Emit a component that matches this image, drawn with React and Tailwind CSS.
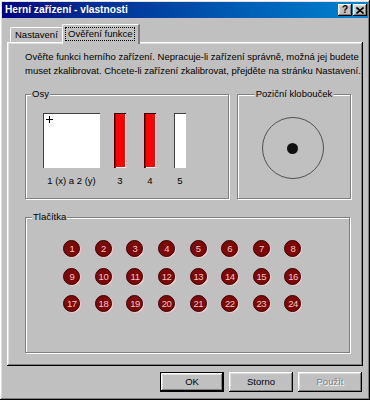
import React from "react";

const raised =
  "shadow-[inset_-1px_-1px_#000,inset_1px_1px_#fff,inset_-2px_-2px_#808080,inset_2px_2px_#dfdfdf]";
const etched = "border border-[#808080] shadow-[inset_1px_1px_#fff,1px_1px_#fff]";
const sunken = "shadow-[inset_1px_1px_#404040,inset_-1px_-1px_#fff]";

function Group({ label, center, labelLeft = "left-[4px]", className, children }) {
  return (
    <div className={`relative ${etched} ${className}`}>
      <span
        className={`absolute -top-[8px] px-[1px] bg-[#c0c0c0] leading-[14px] whitespace-nowrap ${
          center ? "left-1/2 -translate-x-1/2" : labelLeft
        }`}
      >
        {label}
      </span>
      {children}
    </div>
  );
}

function DialogButton({ children, primary, disabled }) {
  return (
    <div
      className={`w-[64px] h-[20px] flex items-center justify-center ${
        primary ? "border border-black" : ""
      } ${raised} ${disabled ? "text-[#808080] [text-shadow:1px_1px_#fff]" : "text-black"}`}
    >
      {children}
    </div>
  );
}

export default function App() {
  const buttons = Array.from({ length: 24 }, (_, i) => i + 1);

  return (
    <div
      className={`w-[370px] h-[400px] bg-[#c0c0c0] px-[2px] pt-[2px] flex flex-col text-[9.5px] text-black ${raised}`}
      style={{ fontFamily: '"Liberation Sans", Arial, sans-serif' }}
    >
      {/* Title bar */}
      <div className="h-[16px] flex items-center justify-between pl-[3px] pr-[1px] bg-gradient-to-r from-[#000080] to-[#1084d0]">
        <span className="text-white font-bold text-[10.2px] leading-none">Herní zařízení - vlastnosti</span>
        <div className="flex gap-[1px]">
          <div className={`w-[14px] h-[12px] bg-[#c0c0c0] ${raised} flex items-center justify-center font-bold text-[10px] leading-none`}>
            ?
          </div>
          <div className={`w-[14px] h-[12px] bg-[#c0c0c0] ${raised} flex items-center justify-center`}>
            <svg width="8" height="7" viewBox="0 0 8 7">
              <path d="M0.5 0.5 L7.5 6.5 M7.5 0.5 L0.5 6.5" stroke="#000" strokeWidth="1.6" />
            </svg>
          </div>
        </div>
      </div>

      {/* Tabs */}
      <div className="mt-[6px] h-[18px] flex items-end pl-[8px]">
        <div className="h-[15px] px-[4px] flex items-center border-t border-l border-white border-r-2 border-r-[#808080] rounded-tl-[2px]">
          Nastavení
        </div>
        <div className="relative z-10 -ml-[2px] -mb-[2px] h-[20px] w-[78px] bg-[#c0c0c0] border-t border-l border-white border-r-2 border-r-[#808080] rounded-tl-[2px] flex items-start justify-center pt-[2px]">
          <span className="px-[2px] leading-[12px] border border-dotted border-black whitespace-nowrap">Ověření funkce</span>
        </div>
      </div>

      {/* Tab page */}
      <div className={`ml-[5px] w-[356px] h-[324px] ${raised} pt-[8px] pl-[18px]`}>
        <p className="leading-[14px] whitespace-nowrap">
          Ověřte funkci herního zařízení. Nepracuje-li zařízení správně, možná jej budete
          <br />
          muset zkalibrovat. Chcete-li zařízení zkalibrovat, přejděte na stránku Nastavení.
        </p>

        <div className="mt-[16px] flex gap-[8px]">
          <Group label="Osy" labelLeft="left-[5px]" className="w-[204px] h-[105px]">
            <div className="flex items-start pl-[17px] pt-[18px]">
              <div className="flex flex-col items-center">
                <div className={`relative w-[57px] h-[55px] bg-white ${sunken}`}>
                  <svg className="absolute left-[3px] top-[3px]" width="7" height="7" viewBox="0 0 7 7">
                    <path d="M3.5 0 V7 M0 3.5 H7" stroke="#000" strokeWidth="1" />
                  </svg>
                </div>
                <span className="mt-[6px] leading-[14px] whitespace-nowrap">1 (x) a 2 (y)</span>
              </div>
              {["3", "4"].map((n, i) => (
                <div key={n} className={`flex flex-col items-center ${i === 0 ? "ml-[14px]" : "ml-[18px]"}`}>
                  <div className="w-[12px] h-[55px] bg-[#ff0000] shadow-[inset_1px_1px_#400000,inset_2px_0_#a00000,inset_-1px_-1px_#fff]" />
                  <span className="mt-[6px] leading-[14px]">{n}</span>
                </div>
              ))}
              <div className="flex flex-col items-center ml-[18px]">
                <div className={`w-[12px] h-[55px] bg-white ${sunken}`} />
                <span className="mt-[6px] leading-[14px]">5</span>
              </div>
            </div>
          </Group>

          <Group label="Poziční klobouček" center className="w-[114px] h-[105px]">
            <div className="h-full flex items-center justify-center pr-[3px] pt-[3px]">
              <div className="w-[62px] h-[62px] rounded-full border border-[#505050] flex items-center justify-center">
                <div className="w-[11px] h-[11px] rounded-full bg-[#111]" />
              </div>
            </div>
          </Group>
        </div>

        <Group label="Tlačítka" labelLeft="left-[6px]" className="mt-[18px] w-[325px] h-[136px]">
          <div className="grid grid-cols-[repeat(8,31.6px)] auto-rows-[27.5px] pl-[30px] pt-[17px]">
            {buttons.map((n) => (
              <div key={n} className="flex items-center justify-center">
                <div className="w-[17px] h-[17px] rounded-full bg-[#7c0808] border border-[#3a0000] shadow-[1px_1px_0_#f2c8c8] flex items-center justify-center text-[9.5px] leading-none text-[#f6c4c4] tracking-[-0.5px]">
                  {n}
                </div>
              </div>
            ))}
          </div>
        </Group>
      </div>

      {/* Dialog buttons */}
      <div className="mt-[6px] flex justify-end gap-[5px] pr-[6px]">
        <DialogButton primary>OK</DialogButton>
        <DialogButton>Storno</DialogButton>
        <DialogButton disabled>Použít</DialogButton>
      </div>
    </div>
  );
}
